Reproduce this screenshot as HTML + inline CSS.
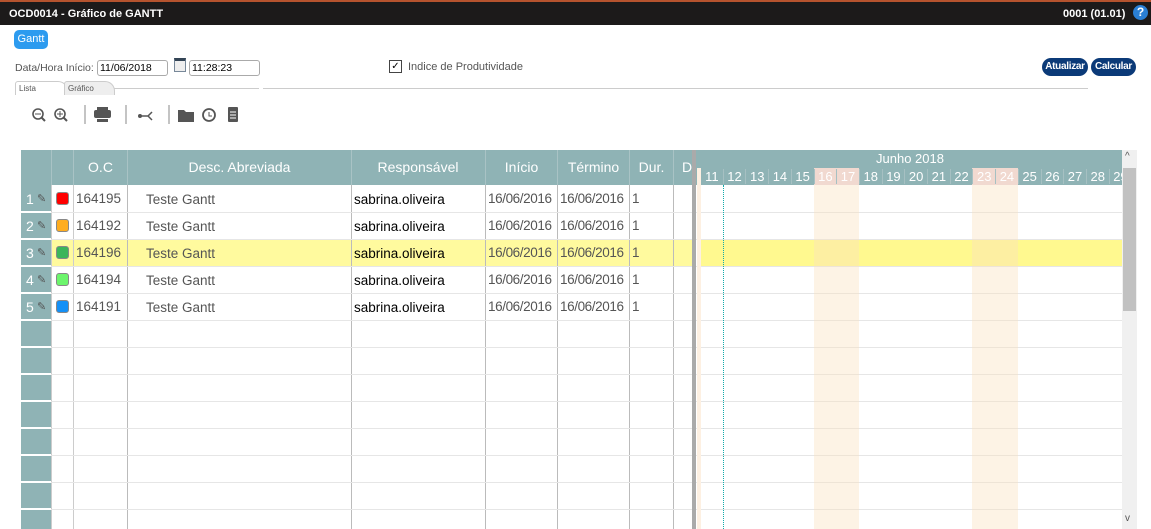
<!DOCTYPE html>
<html><head><meta charset="utf-8"><style>
body{margin:0;width:1151px;height:529px;overflow:hidden;background:#fff;font-family:"Liberation Sans",Arial,sans-serif;position:relative}
.a{position:absolute}
.top{left:0;top:0;width:1151px;height:25px;background:#1c1a1a;border-top:2px solid #b5532e;box-sizing:border-box;color:#fff;font-weight:bold;font-size:11px}
.inp{border:1px solid #aaa;border-radius:3px;height:14px;font-size:10.5px;line-height:14px;padding-left:2px;box-sizing:content-box}
.btn{background:#0b3a78;color:#fff;font-size:10px;font-weight:bold;border-radius:9px;height:18px;line-height:18px;text-align:center;letter-spacing:-0.3px}
.hd{background:#8fb3b5;color:#fff;font-size:14px;text-align:center}
.vl{width:1px;background:#bbb}
.hl{height:1px;background:#e6e6e6}
.cell{font-size:13.5px;color:#555;white-space:nowrap}
</style></head><body>
<div class="a top"><span class="a" style="left:9px;top:6px">OCD0014 - Gráfico de GANTT</span><span class="a" style="left:1063px;top:6px">0001 (01.01)</span>
<div class="a" style="left:1133px;top:3px;width:15px;height:15px;border-radius:50%;background:#2a7fd4;color:#fff;font-size:12px;text-align:center;line-height:15px">?</div></div>
<div class="a" style="left:14px;top:30px;width:34px;height:19px;background:#2d9bef;border-radius:5px;color:#fff;font-size:11px;text-align:center;line-height:19px">Gantt</div>
<span class="a" style="left:15px;top:62px;font-size:10.5px;color:#555">Data/Hora Início:</span>
<div class="a inp" style="left:97px;top:60px;width:67px">11/06/2018</div>
<div class="a" style="left:174px;top:58px;width:10px;height:10px;border:1px solid #789;border-top:3px solid #345;background:#eee"></div>
<div class="a inp" style="left:189px;top:60px;width:67px">11:28:23</div>
<div class="a" style="left:389px;top:60px;width:11px;height:11px;border:1px solid #444;font-size:10px;line-height:11px;text-align:center">✓</div>
<span class="a" style="left:408px;top:61px;font-size:11px;color:#555">Indice de Produtividade</span>
<div class="a btn" style="left:1042px;top:58px;width:46px">Atualizar</div>
<div class="a btn" style="left:1091px;top:58px;width:45px">Calcular</div>
<div class="a" style="left:15px;top:81px;width:48px;height:13px;border:1px solid #ccc;border-bottom:none;border-radius:3px 10px 0 0;font-size:8px;color:#555;padding-left:3px;line-height:13px">Lista</div>
<div class="a" style="left:64px;top:81px;width:46px;height:13px;border:1px solid #ccc;border-bottom:none;border-radius:3px 10px 0 0;background:#eee;font-size:8px;color:#555;padding-left:3px;line-height:13px">Gráfico</div>
<div class="a" style="left:114px;top:88px;width:145px;height:1px;background:#ccc"></div>
<div class="a" style="left:263px;top:88px;width:825px;height:1px;background:#ccc"></div>
<svg class="a" style="left:28px;top:104px" width="220" height="22" fill="#555" stroke="#555">
<circle cx="10" cy="10" r="5" fill="none" stroke-width="1.6"/><line x1="13" y1="13" x2="17" y2="17" stroke-width="2"/><line x1="7" y1="10" x2="13" y2="10"/>
<circle cx="32" cy="10" r="5" fill="none" stroke-width="1.6"/><line x1="35" y1="13" x2="39" y2="17" stroke-width="2"/><line x1="29" y1="10" x2="35" y2="10"/><line x1="32" y1="7" x2="32" y2="13"/>
<line x1="57" y1="1" x2="57" y2="20" stroke="#888"/>
<rect x="66" y="6" width="17" height="8" rx="2" stroke="none"/><rect x="69" y="3" width="11" height="3" stroke="none"/><rect x="69" y="15" width="11" height="3" stroke="none"/>
<line x1="98" y1="1" x2="98" y2="20" stroke="#888"/>
<circle cx="112" cy="12" r="2" stroke="none"/><path d="M112 12H120L124 8M120 12L124 16" fill="none" stroke-width="1.5"/>
<line x1="141" y1="1" x2="141" y2="20" stroke="#888"/>
<path d="M150 6h6l2 2h8v10h-16z" stroke="none"/>
<circle cx="181" cy="11" r="6" fill="none" stroke-width="1.8"/><path d="M181 8v4h3" fill="none"/>
<rect x="200" y="3" width="10" height="15" rx="1" stroke="none"/><path d="M202 8h6M202 11h6M202 14h6" stroke="#fff"/>
</svg>
<div class="a hd" style="left:21px;top:150px;width:1101px;height:35px"></div>
<div class="a" style="left:21px;top:185px;width:30px;height:344px;background:#8fb3b5"></div>
<div class="a" style="left:51px;top:239px;width:643px;height:27px;background:#fffa9e"></div>
<div class="a" style="left:697px;top:239px;width:426px;height:27px;background:#fff98f"></div>
<div class="a hd" style="left:74px;top:159px;width:53px;background:none">O.C</div>
<div class="a hd" style="left:128px;top:159px;width:223px;background:none">Desc. Abreviada</div>
<div class="a hd" style="left:351px;top:159px;width:134px;background:none">Responsável</div>
<div class="a hd" style="left:486px;top:159px;width:71px;background:none">Início</div>
<div class="a hd" style="left:558px;top:159px;width:71px;background:none">Término</div>
<div class="a hd" style="left:630px;top:159px;width:43px;background:none">Dur.</div>
<div class="a hd" style="left:674px;top:159px;width:18px;background:none;text-align:left;padding-left:8px">D</div>
<div class="a hd" style="left:697px;top:151px;width:426px;background:none;font-size:13px">Junho 2018</div>
<div id="g"></div>
<div class="a" style="left:692px;top:150px;width:4px;height:379px;background:#aaa"></div>
<div class="a" style="left:697px;top:168px;width:4px;height:361px;background:#fdf0e2"></div>
<div class="a" style="left:723px;top:185px;width:0;height:344px;border-left:1px dotted #1aa"></div>
<div class="a" style="left:1122px;top:150px;width:15px;height:379px;background:#f0f0f0"></div>
<div class="a" style="left:1123px;top:168px;width:13px;height:143px;background:#c1c1c1"></div>
<span class="a" style="left:1125px;top:151px;font-size:10px;color:#555">^</span>
<span class="a" style="left:1125px;top:513px;font-size:10px;color:#555">v</span>
<script>
var h='';
var cols=[51,73,127,351,485,557,629,673];
for(var i=0;i<cols.length;i++)h+='<div class="a vl" style="left:'+cols[i]+'px;top:'+(i==0?150:185)+'px;height:'+(i==0?379:344)+'px;background:'+(i<2?'#ccc':'#bbb')+'"></div>';
for(var i=0;i<cols.length;i++)h+='<div class="a" style="left:'+cols[i]+'px;top:150px;width:1px;height:35px;background:#a9c3c5"></div>';
for(var y=212;y<529;y+=27){h+='<div class="a hl" style="left:51px;top:'+y+'px;width:1071px"></div><div class="a" style="left:21px;top:'+(y-1)+'px;width:30px;height:2px;background:#fff"></div>';}
var days=[11,12,13,14,15,16,17,18,19,20,21,22,23,24,25,26,27,28,29];
for(var i=0;i<days.length;i++){var x=700+i*22.7,we=(days[i]==16||days[i]==17||days[i]==23||days[i]==24);
if(we){h+='<div class="a" style="left:'+x+'px;top:168px;width:22.7px;height:17px;background:#f1d9d0"></div><div class="a" style="left:'+x+'px;top:185px;width:22.7px;height:344px;background:rgba(250,225,190,0.4)"></div>';}
h+='<div class="a" style="left:'+x+'px;top:169px;width:22.7px;font-size:13px;color:#fff;text-align:center;border-left:1px solid #a6c0c2;box-sizing:border-box">'+days[i]+'</div>';}
var rows=[['164195','#f00'],['164192','#ffad1f'],['164196','#3cb55a'],['164194','#6cf56c'],['164191','#1590f5']];
for(var r=0;r<5;r++){var t=185+r*27+6;
h+='<span class="a" style="left:26px;top:'+t+'px;font-size:14px;color:#fff">'+(r+1)+'</span><span class="a" style="left:37px;top:'+(t+1)+'px;font-size:11px;color:#555">&#9998;</span>';
h+='<div class="a" style="left:56px;top:'+(t+1)+'px;width:11px;height:11px;border:1px solid #888;border-radius:3px;background:'+rows[r][1]+'"></div>';
h+='<span class="a cell" style="left:76px;top:'+t+'px">'+rows[r][0]+'</span>';
h+='<span class="a cell" style="left:146px;top:'+(t+1)+'px">Teste Gantt</span>';
h+='<span class="a cell" style="left:354px;top:'+(t+1)+'px;color:#000">sabrina.oliveira</span>';
h+='<span class="a cell" style="left:488px;top:'+t+'px;letter-spacing:-0.4px">16/06/2016</span>';
h+='<span class="a cell" style="left:560px;top:'+t+'px;letter-spacing:-0.4px">16/06/2016</span>';
h+='<span class="a cell" style="left:632px;top:'+t+'px">1</span>';}
document.getElementById('g').innerHTML=h;
</script>
</body></html>
